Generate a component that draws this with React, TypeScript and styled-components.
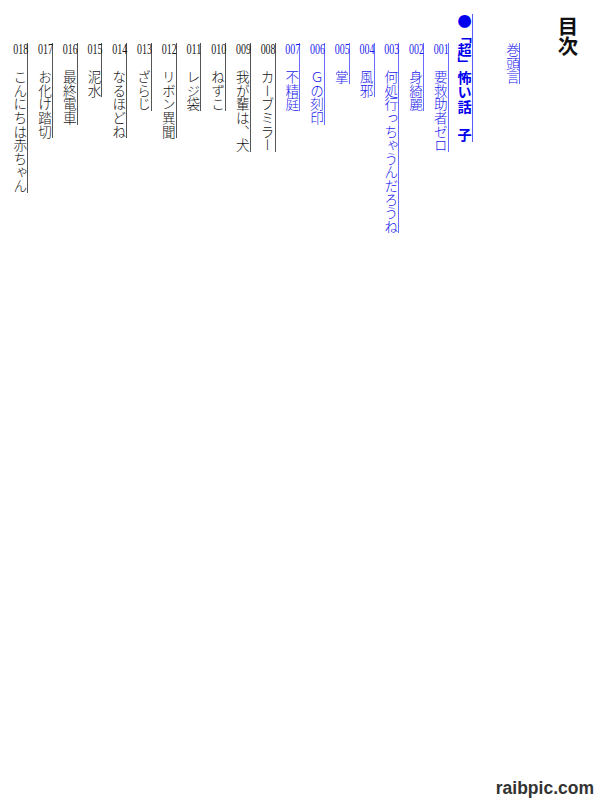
import React from "react";
import styled, { createGlobalStyle, css } from "styled-components";

const GlobalStyle = createGlobalStyle`
  html, body {
    margin: 0;
    padding: 0;
    background: #ffffff;
  }
`;

const verticalStyle = css`
  writing-mode: vertical-rl;
  text-orientation: mixed;
  white-space: nowrap;
`;

const Page = styled.div`
  position: relative;
  width: 600px;
  height: 800px;
  box-sizing: border-box;
  padding-right: 22px;
  overflow: hidden;
  display: flex;
  flex-direction: row-reverse;
  align-items: flex-start;
  font-family: "Noto Sans CJK JP", sans-serif;
`;

const Heading = styled.h1`
  ${verticalStyle};
  margin: 16px 0 0 37.6px;
  font-size: 20.4px;
  line-height: 20.4px;
  font-weight: 700;
  color: #111111;
`;

const Entry = styled.div<{ $link?: boolean; $spaced?: boolean }>`
  ${verticalStyle};
  margin: 43px 0 0 ${(p) => (p.$spaced ? 32.9 : 9.15)}px;
  font-size: 13.6px;
  line-height: 13.6px;
  font-weight: 300;
  color: ${(p) => (p.$link ? "#1a1aee" : "#151515")};
  border-right: 1px solid ${(p) => (p.$link ? "#6b6bff" : "#555555")};
`;

const SectionTitle = styled.div`
  ${verticalStyle};
  margin: 14px 0 0 8.55px;
  font-size: 14.2px;
  line-height: 14.2px;
  font-weight: 700;
  color: #0000ee;
  border-right: 1px solid #5a5aff;
`;

const Number = styled.span`
  text-combine-upright: all;
  font-family: "Liberation Serif", serif;
  font-weight: 400;
`;

const Watermark = styled.div`
  position: absolute;
  top: 780px;
  right: 6px;
  font-family: "Liberation Sans", Arial, sans-serif;
  font-size: 17.5px;
  line-height: 1;
  font-weight: 700;
  color: #333333;
`;

type Story = { no: string; title: string; link: boolean };

const stories: Story[] = [
  { no: "001", title: "要救助者ゼロ", link: true },
  { no: "002", title: "身綺麗", link: true },
  { no: "003", title: "何処行っちゃうんだろうね", link: true },
  { no: "004", title: "風邪", link: true },
  { no: "005", title: "掌", link: true },
  { no: "006", title: "Ｇの刻印", link: true },
  { no: "007", title: "不精庭", link: true },
  { no: "008", title: "カーブミラー", link: false },
  { no: "009", title: "我が輩は、犬", link: false },
  { no: "010", title: "ねずこ", link: false },
  { no: "011", title: "レジ袋", link: false },
  { no: "012", title: "リボン異聞", link: false },
  { no: "013", title: "ざらじ", link: false },
  { no: "014", title: "なるほどね", link: false },
  { no: "015", title: "泥水", link: false },
  { no: "016", title: "最終電車", link: false },
  { no: "017", title: "お化け踏切", link: false },
  { no: "018", title: "こんにちは赤ちゃん", link: false },
];

export default function App() {
  return (
    <>
      <GlobalStyle />
      <Page lang="ja">
        <Heading>目次</Heading>
        <Entry $link $spaced>
          巻頭言
        </Entry>
        <SectionTitle>●「超」怖い話　子</SectionTitle>
        {stories.map((s) => (
          <Entry key={s.no} $link={s.link}>
            <Number>{s.no}</Number>
            {"　"}
            {s.title}
          </Entry>
        ))}
        <Watermark>raibpic.com</Watermark>
      </Page>
    </>
  );
}
